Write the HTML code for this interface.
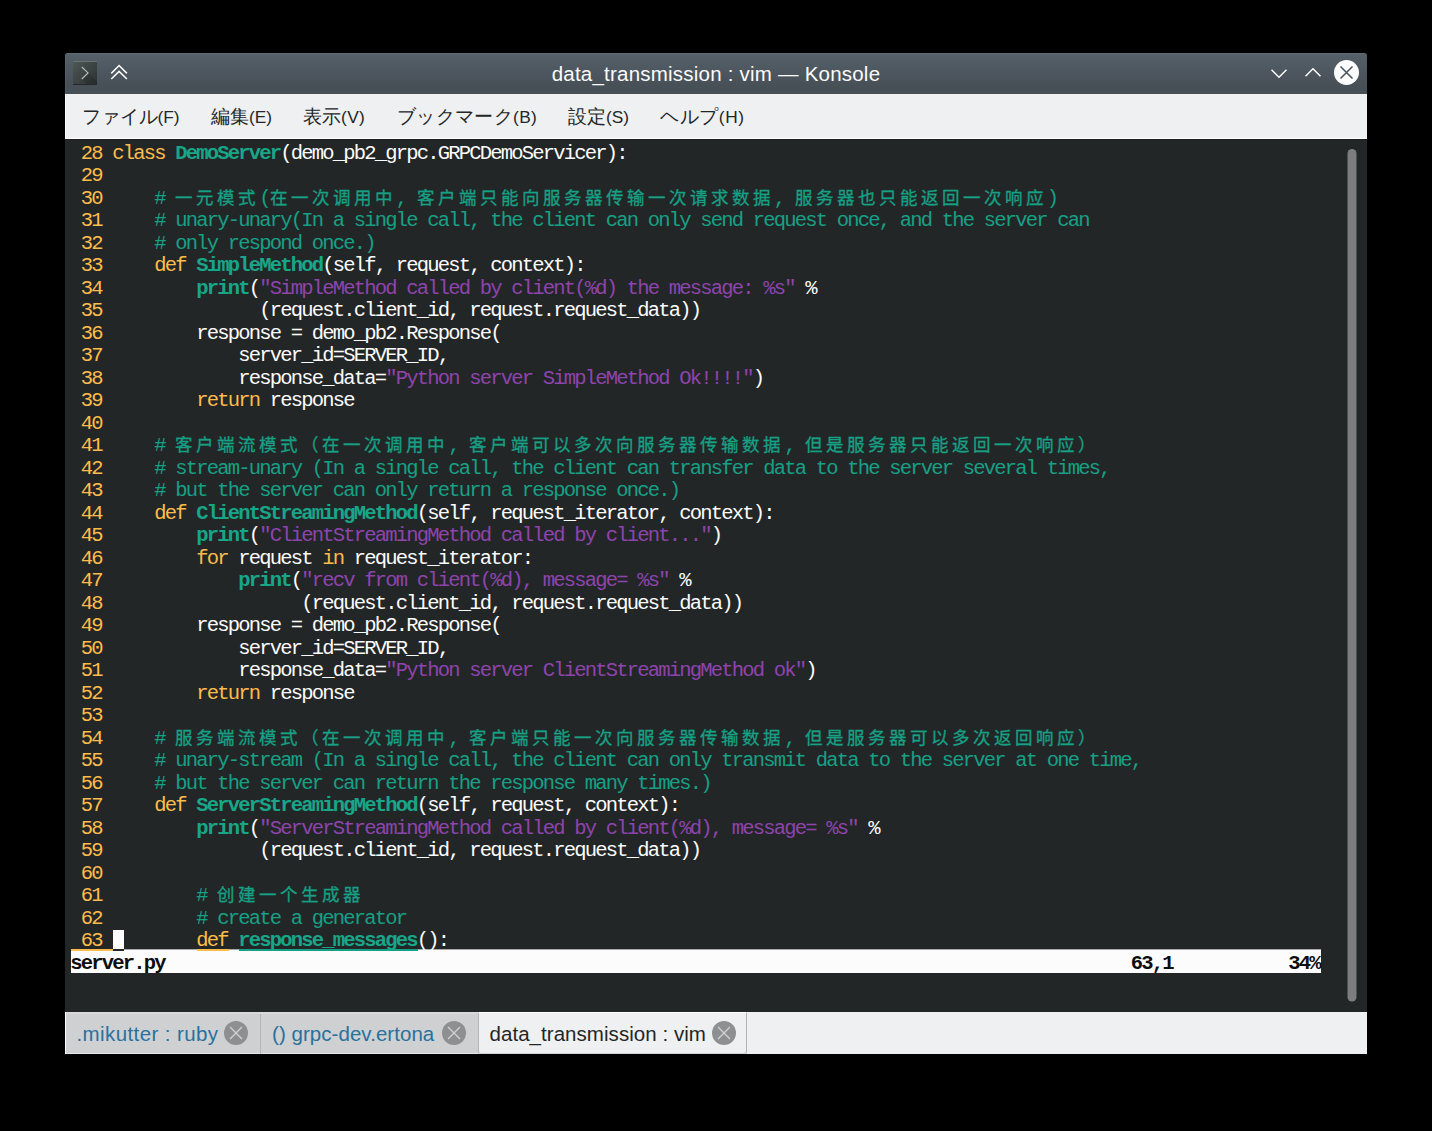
<!DOCTYPE html>
<html lang="ja">
<head>
<meta charset="utf-8">
<title>data_transmission : vim — Konsole</title>
<style>
html,body{margin:0;padding:0;background:#000;}
body{width:1432px;height:1131px;overflow:hidden;position:relative;font-family:"Liberation Sans",sans-serif;}
#win{position:absolute;left:65px;top:53px;width:1302px;height:1001px;overflow:hidden;border-radius:3px 3px 0 0;background:#232627;}
#tb{position:absolute;left:0;top:0;width:1302px;height:41px;background:linear-gradient(#566069 0%,#475057 80%,#475057 100%);box-shadow:inset 0 1px 0 rgba(255,255,255,.07),inset 1px 0 0 rgba(255,255,255,.05);}
#title{position:absolute;left:0;top:-0.5px;width:1302px;height:41px;line-height:41px;text-align:center;color:#fcfcfc;font-size:20.5px;letter-spacing:0.22px;white-space:pre;}
#mb{position:absolute;left:0;top:41px;width:1302px;height:45px;background:#eff0f1;box-shadow:inset 1px 0 0 #fff,inset 0 -1px 0 #fff;}
#mb b{font-weight:normal;font-size:17.3px;}
#mb span{position:absolute;top:0;height:45px;line-height:45px;font-size:19px;color:#232627;white-space:pre;}
#term{position:absolute;left:0;top:86px;width:1302px;height:873px;background:#232627;box-shadow:inset 0 1px 0 #1b1e1f;}
.r{position:absolute;left:5.25px;height:22.5px;line-height:22.5px;white-space:pre;color:#fcfcfc;font-family:"Liberation Mono",monospace;font-size:20.5px;letter-spacing:-1.802px;}
.n,.k{color:#fdbc4b;}
.f{color:#18a689;font-weight:bold;}
.c{color:#16a085;}
.s{color:#8e44ad;}
.z{letter-spacing:0;font-size:17.5px;font-weight:500;position:relative;top:-0.5px;-webkit-text-stroke:0.3px currentColor;}
.z i{display:inline-block;width:21px;text-align:left;font-style:normal;}
#tabs{position:absolute;left:0;top:959px;width:1302px;height:42px;background:#eff0f1;}

#sbar{position:absolute;left:6px;top:898px;width:1250px;height:22px;background:#fcfcfc;}
.r.st{color:#0c0e0f;font-weight:bold;}
#cur{position:absolute;left:48px;top:877px;width:11px;height:19px;background:#fcfcfc;}
.u{position:absolute;top:896px;height:2px;}
#thumb{position:absolute;left:1281px;top:95px;}
#tabs .in{position:absolute;left:0;top:0;width:414px;height:42px;background:#cfd0d1;box-shadow:inset 1px 0 0 #fff,inset 0 -1px 0 #e6e7e8,inset 0 2px 0 #d8d9da;}
#tabs .sep{position:absolute;left:195px;top:2px;width:1px;height:40px;background:#b4b6b7;}
#tabs .act{position:absolute;left:413px;top:0;width:267px;height:40px;background:#eff0f1;border:1px solid #b2b4b5;border-top:1px solid #fff;border-bottom-color:#d2d3d4;border-radius:0 0 3px 3px;box-sizing:content-box;}
#tabs .lb{position:absolute;top:1px;height:42px;line-height:42px;font-size:20.5px;white-space:pre;color:#29709e;}
#tabs .cb{position:absolute;top:9px;width:24px;height:24px;}
.ic{position:absolute;}
.r u{display:inline-block;text-decoration:none;}
.w1{width:10.5px}.w2{width:21.0px}.w3{width:31.5px}.w4{width:42.0px}.w5{width:52.5px}.w6{width:63.0px}.w7{width:73.5px}.w8{width:84.0px}
</style>
</head>
<body>
<div id="win">
  <div id="tb"></div>
  <div id="title">data_transmission : vim — Konsole</div>
  
  <svg class="ic" style="left:8px;top:8px" width="24" height="24" viewBox="0 0 24 24"><defs><linearGradient id="kg" x1="0" y1="0" x2="1" y2="1"><stop offset="0" stop-color="#4d5855"/><stop offset="1" stop-color="#2c3032"/></linearGradient></defs><rect width="24" height="24" fill="url(#kg)"/><path d="M15.3 11.9L24 20.6V24H14.8L8.8 18Z" fill="#000" fill-opacity="0.13"/><rect width="24" height="1" fill="#6b7171"/><rect y="23" width="24" height="1" fill="#26292b"/><path d="M8.8 6L15.1 11.95L8.8 18" stroke="#bcc0c1" stroke-width="1.05" fill="none"/></svg>
  <svg class="ic" style="left:45px;top:11px" width="18" height="16" viewBox="0 0 18 16"><path d="M1.3 9.4L9.1 1.5L16.9 9.4M1.3 15L9.1 7.4L16.9 15" stroke="#fcfcfc" stroke-width="1.5" fill="none"/></svg>
  <svg class="ic" style="left:1205px;top:15px" width="18" height="11" viewBox="0 0 18 11"><path d="M1.5 1.8L9 9.3L16.5 1.8" stroke="#fcfcfc" stroke-width="1.5" fill="none"/></svg>
  <svg class="ic" style="left:1239px;top:14px" width="18" height="11" viewBox="0 0 18 11"><path d="M1.5 9.3L9 1.8L16.5 9.3" stroke="#fcfcfc" stroke-width="1.5" fill="none"/></svg>
  <svg class="ic" style="left:1269px;top:7px" width="25" height="25" viewBox="0 0 25 25"><circle cx="12.5" cy="12.5" r="12.5" fill="#fcfcfc"/><path d="M6.5 6.5L18.5 18.5M18.5 6.5L6.5 18.5" stroke="#475057" stroke-width="1.5" fill="none"/></svg>
  <div id="mb" lang="ja"><span style="left:16.5px">ファイル<b>(F)</b></span><span style="left:146px">編集<b>(E)</b></span><span style="left:237.5px;letter-spacing:0.3px">表示<b>(V)</b></span><span style="left:332px;letter-spacing:0.35px">ブックマーク<b>(B)</b></span><span style="left:503px">設定<b>(S)</b></span><span style="left:595px;letter-spacing:0.6px">ヘルプ<b>(H)</b></span></div>
  <div id="term"></div>

  <svg id="thumb" width="12" height="856" viewBox="0 0 12 856"><rect x="1.5" y="1" width="9" height="852.5" rx="4.5" fill="#7b7d7e"/></svg>
  <div id="sbar"></div>
  <div id="cur"></div>
  <div class="u" style="left:6px;width:42px;background:#fdbc4b"></div>
  <div class="u" style="left:48px;width:11px;background:#232627"></div>
  <div class="u" style="left:59px;width:73px;background:linear-gradient(#a8aaab 50%,#fcfcfc 50%)"></div>
  <div class="u" style="left:132px;width:32px;background:#fdbc4b"></div>
  <div class="u" style="left:164px;width:10px;background:linear-gradient(#a8aaab 50%,#fcfcfc 50%)"></div>
  <div class="u" style="left:174px;width:179px;background:#16a085"></div>
  <div class="u" style="left:353px;width:903px;background:linear-gradient(#a8aaab 50%,#fcfcfc 50%)"></div>
<div class="r" style="top:90.0px"><span class="n"><u class="w4"> 28 </u></span><span class="k"><u class="w5">class</u></span><u class="w1"> </u><span class="f"><u class="w8">DemoServ</u><u class="w2">er</u></span><u class="w8">(demo_pb</u><u class="w8">2_grpc.G</u><u class="w8">RPCDemoS</u><u class="w8">ervicer)</u><u class="w1">:</u></div>
<div class="r" style="top:112.0px"><span class="n"><u class="w4"> 29 </u></span></div>
<div class="r" style="top:135.0px"><span class="n"><u class="w4"> 30 </u></span><u class="w4">    </u><span class="c"><u class="w2"># </u><span class="z" lang="zh-CN"><i>一</i><i>元</i><i>模</i><i>式</i></span><u class="w1">(</u><span class="z" lang="zh-CN"><i>在</i><i>一</i><i>次</i><i>调</i><i>用</i><i>中</i></span><u class="w2">, </u><span class="z" lang="zh-CN"><i>客</i><i>户</i><i>端</i><i>只</i><i>能</i><i>向</i><i>服</i><i>务</i><i>器</i><i>传</i><i>输</i><i>一</i><i>次</i><i>请</i><i>求</i><i>数</i><i>据</i></span><u class="w2">, </u><span class="z" lang="zh-CN"><i>服</i><i>务</i><i>器</i><i>也</i><i>只</i><i>能</i><i>返</i><i>回</i><i>一</i><i>次</i><i>响</i><i>应</i></span><u class="w1">)</u></span></div>
<div class="r" style="top:157.0px"><span class="n"><u class="w4"> 31 </u></span><u class="w4">    </u><span class="c"><u class="w8"># unary-</u><u class="w8">unary(In</u><u class="w8"> a singl</u><u class="w8">e call, </u><u class="w8">the clie</u><u class="w8">nt can o</u><u class="w8">nly send</u><u class="w8"> request</u><u class="w8"> once, a</u><u class="w8">nd the s</u><u class="w8">erver ca</u><u class="w1">n</u></span></div>
<div class="r" style="top:180.0px"><span class="n"><u class="w4"> 32 </u></span><u class="w4">    </u><span class="c"><u class="w8"># only r</u><u class="w8">espond o</u><u class="w5">nce.)</u></span></div>
<div class="r" style="top:202.0px"><span class="n"><u class="w4"> 33 </u></span><u class="w4">    </u><span class="k"><u class="w3">def</u></span><u class="w1"> </u><span class="f"><u class="w8">SimpleMe</u><u class="w4">thod</u></span><u class="w8">(self, r</u><u class="w8">equest, </u><u class="w8">context)</u><u class="w1">:</u></div>
<div class="r" style="top:225.0px"><span class="n"><u class="w4"> 34 </u></span><u class="w8">        </u><span class="f"><u class="w5">print</u></span><u class="w1">(</u><span class="s"><u class="w8">"SimpleM</u><u class="w8">ethod ca</u><u class="w8">lled by </u><u class="w8">client(%</u><u class="w8">d) the m</u><u class="w8">essage: </u><u class="w3">%s"</u></span><u class="w2"> %</u></div>
<div class="r" style="top:247.0px"><span class="n"><u class="w4"> 35 </u></span><u class="w8">        </u><u class="w8">      (r</u><u class="w8">equest.c</u><u class="w8">lient_id</u><u class="w8">, reques</u><u class="w8">t.reques</u><u class="w8">t_data))</u></div>
<div class="r" style="top:270.0px"><span class="n"><u class="w4"> 36 </u></span><u class="w8">        </u><u class="w8">response</u><u class="w8"> = demo_</u><u class="w8">pb2.Resp</u><u class="w5">onse(</u></div>
<div class="r" style="top:292.0px"><span class="n"><u class="w4"> 37 </u></span><u class="w8">        </u><u class="w8">    serv</u><u class="w8">er_id=SE</u><u class="w8">RVER_ID,</u></div>
<div class="r" style="top:315.0px"><span class="n"><u class="w4"> 38 </u></span><u class="w8">        </u><u class="w8">    resp</u><u class="w8">onse_dat</u><u class="w2">a=</u><span class="s"><u class="w8">"Python </u><u class="w8">server S</u><u class="w8">impleMet</u><u class="w8">hod Ok!!</u><u class="w3">!!"</u></span><u class="w1">)</u></div>
<div class="r" style="top:337.0px"><span class="n"><u class="w4"> 39 </u></span><u class="w8">        </u><span class="k"><u class="w6">return</u></span><u class="w8"> respons</u><u class="w1">e</u></div>
<div class="r" style="top:360.0px"><span class="n"><u class="w4"> 40 </u></span></div>
<div class="r" style="top:382.0px"><span class="n"><u class="w4"> 41 </u></span><u class="w4">    </u><span class="c"><u class="w2"># </u><span class="z" lang="zh-CN"><i>客</i><i>户</i><i>端</i><i>流</i><i>模</i><i>式</i><i>（</i><i>在</i><i>一</i><i>次</i><i>调</i><i>用</i><i>中</i></span><u class="w2">, </u><span class="z" lang="zh-CN"><i>客</i><i>户</i><i>端</i><i>可</i><i>以</i><i>多</i><i>次</i><i>向</i><i>服</i><i>务</i><i>器</i><i>传</i><i>输</i><i>数</i><i>据</i></span><u class="w2">, </u><span class="z" lang="zh-CN"><i>但</i><i>是</i><i>服</i><i>务</i><i>器</i><i>只</i><i>能</i><i>返</i><i>回</i><i>一</i><i>次</i><i>响</i><i>应</i><i>）</i></span></span></div>
<div class="r" style="top:405.0px"><span class="n"><u class="w4"> 42 </u></span><u class="w4">    </u><span class="c"><u class="w8"># stream</u><u class="w8">-unary (</u><u class="w8">In a sin</u><u class="w8">gle call</u><u class="w8">, the cl</u><u class="w8">ient can</u><u class="w8"> transfe</u><u class="w8">r data t</u><u class="w8">o the se</u><u class="w8">rver sev</u><u class="w8">eral tim</u><u class="w3">es,</u></span></div>
<div class="r" style="top:427.0px"><span class="n"><u class="w4"> 43 </u></span><u class="w4">    </u><span class="c"><u class="w8"># but th</u><u class="w8">e server</u><u class="w8"> can onl</u><u class="w8">y return</u><u class="w8"> a respo</u><u class="w8">nse once</u><u class="w2">.)</u></span></div>
<div class="r" style="top:450.0px"><span class="n"><u class="w4"> 44 </u></span><u class="w4">    </u><span class="k"><u class="w3">def</u></span><u class="w1"> </u><span class="f"><u class="w8">ClientSt</u><u class="w8">reamingM</u><u class="w5">ethod</u></span><u class="w8">(self, r</u><u class="w8">equest_i</u><u class="w8">terator,</u><u class="w8"> context</u><u class="w2">):</u></div>
<div class="r" style="top:472.0px"><span class="n"><u class="w4"> 45 </u></span><u class="w8">        </u><span class="f"><u class="w5">print</u></span><u class="w1">(</u><span class="s"><u class="w8">"ClientS</u><u class="w8">treaming</u><u class="w8">Method c</u><u class="w8">alled by</u><u class="w8"> client.</u><u class="w3">.."</u></span><u class="w1">)</u></div>
<div class="r" style="top:495.0px"><span class="n"><u class="w4"> 46 </u></span><u class="w8">        </u><span class="k"><u class="w3">for</u></span><u class="w8"> request</u><u class="w1"> </u><span class="k"><u class="w2">in</u></span><u class="w8"> request</u><u class="w8">_iterato</u><u class="w2">r:</u></div>
<div class="r" style="top:517.0px"><span class="n"><u class="w4"> 47 </u></span><u class="w8">        </u><u class="w4">    </u><span class="f"><u class="w5">print</u></span><u class="w1">(</u><span class="s"><u class="w8">"recv fr</u><u class="w8">om clien</u><u class="w8">t(%d), m</u><u class="w8">essage= </u><u class="w3">%s"</u></span><u class="w2"> %</u></div>
<div class="r" style="top:540.0px"><span class="n"><u class="w4"> 48 </u></span><u class="w8">        </u><u class="w8">        </u><u class="w8">  (reque</u><u class="w8">st.clien</u><u class="w8">t_id, re</u><u class="w8">quest.re</u><u class="w8">quest_da</u><u class="w4">ta))</u></div>
<div class="r" style="top:562.0px"><span class="n"><u class="w4"> 49 </u></span><u class="w8">        </u><u class="w8">response</u><u class="w8"> = demo_</u><u class="w8">pb2.Resp</u><u class="w5">onse(</u></div>
<div class="r" style="top:585.0px"><span class="n"><u class="w4"> 50 </u></span><u class="w8">        </u><u class="w8">    serv</u><u class="w8">er_id=SE</u><u class="w8">RVER_ID,</u></div>
<div class="r" style="top:607.0px"><span class="n"><u class="w4"> 51 </u></span><u class="w8">        </u><u class="w8">    resp</u><u class="w8">onse_dat</u><u class="w2">a=</u><span class="s"><u class="w8">"Python </u><u class="w8">server C</u><u class="w8">lientStr</u><u class="w8">eamingMe</u><u class="w8">thod ok"</u></span><u class="w1">)</u></div>
<div class="r" style="top:630.0px"><span class="n"><u class="w4"> 52 </u></span><u class="w8">        </u><span class="k"><u class="w6">return</u></span><u class="w8"> respons</u><u class="w1">e</u></div>
<div class="r" style="top:652.0px"><span class="n"><u class="w4"> 53 </u></span></div>
<div class="r" style="top:675.0px"><span class="n"><u class="w4"> 54 </u></span><u class="w4">    </u><span class="c"><u class="w2"># </u><span class="z" lang="zh-CN"><i>服</i><i>务</i><i>端</i><i>流</i><i>模</i><i>式</i><i>（</i><i>在</i><i>一</i><i>次</i><i>调</i><i>用</i><i>中</i></span><u class="w2">, </u><span class="z" lang="zh-CN"><i>客</i><i>户</i><i>端</i><i>只</i><i>能</i><i>一</i><i>次</i><i>向</i><i>服</i><i>务</i><i>器</i><i>传</i><i>输</i><i>数</i><i>据</i></span><u class="w2">, </u><span class="z" lang="zh-CN"><i>但</i><i>是</i><i>服</i><i>务</i><i>器</i><i>可</i><i>以</i><i>多</i><i>次</i><i>返</i><i>回</i><i>响</i><i>应</i><i>）</i></span></span></div>
<div class="r" style="top:697.0px"><span class="n"><u class="w4"> 55 </u></span><u class="w4">    </u><span class="c"><u class="w8"># unary-</u><u class="w8">stream (</u><u class="w8">In a sin</u><u class="w8">gle call</u><u class="w8">, the cl</u><u class="w8">ient can</u><u class="w8"> only tr</u><u class="w8">ansmit d</u><u class="w8">ata to t</u><u class="w8">he serve</u><u class="w8">r at one</u><u class="w6"> time,</u></span></div>
<div class="r" style="top:720.0px"><span class="n"><u class="w4"> 56 </u></span><u class="w4">    </u><span class="c"><u class="w8"># but th</u><u class="w8">e server</u><u class="w8"> can ret</u><u class="w8">urn the </u><u class="w8">response</u><u class="w8"> many ti</u><u class="w5">mes.)</u></span></div>
<div class="r" style="top:742.0px"><span class="n"><u class="w4"> 57 </u></span><u class="w4">    </u><span class="k"><u class="w3">def</u></span><u class="w1"> </u><span class="f"><u class="w8">ServerSt</u><u class="w8">reamingM</u><u class="w5">ethod</u></span><u class="w8">(self, r</u><u class="w8">equest, </u><u class="w8">context)</u><u class="w1">:</u></div>
<div class="r" style="top:765.0px"><span class="n"><u class="w4"> 58 </u></span><u class="w8">        </u><span class="f"><u class="w5">print</u></span><u class="w1">(</u><span class="s"><u class="w8">"ServerS</u><u class="w8">treaming</u><u class="w8">Method c</u><u class="w8">alled by</u><u class="w8"> client(</u><u class="w8">%d), mes</u><u class="w8">sage= %s</u><u class="w1">"</u></span><u class="w2"> %</u></div>
<div class="r" style="top:787.0px"><span class="n"><u class="w4"> 59 </u></span><u class="w8">        </u><u class="w8">      (r</u><u class="w8">equest.c</u><u class="w8">lient_id</u><u class="w8">, reques</u><u class="w8">t.reques</u><u class="w8">t_data))</u></div>
<div class="r" style="top:810.0px"><span class="n"><u class="w4"> 60 </u></span></div>
<div class="r" style="top:832.0px"><span class="n"><u class="w4"> 61 </u></span><u class="w8">        </u><span class="c"><u class="w2"># </u><span class="z" lang="zh-CN"><i>创</i><i>建</i><i>一</i><i>个</i><i>生</i><i>成</i><i>器</i></span></span></div>
<div class="r" style="top:855.0px"><span class="n"><u class="w4"> 62 </u></span><u class="w8">        </u><span class="c"><u class="w8"># create</u><u class="w8"> a gener</u><u class="w4">ator</u></span></div>
<div class="r" style="top:877.0px"><span class="n"><u class="w4"> 63 </u></span><u class="w8">        </u><span class="k"><u class="w3">def</u></span><u class="w1"> </u><span class="f"><u class="w8">response</u><u class="w8">_message</u><u class="w1">s</u></span><u class="w3">():</u></div>
<div class="r st" style="top:900.0px"><u class="w8">server.p</u><u class="w1">y</u><u class="wg" style="width:966.0px"></u><u class="w4">63,1</u><u class="wg" style="width:115.5px"></u><u class="w3">34%</u></div>
  <div id="tabs"><div class="in"></div><div class="sep"></div><div class="act"></div><div style="position:absolute;left:413px;top:41px;width:269px;height:1px;background:#d0d1d2"></div>
<span class="lb" id="t1" style="left:11.5px;letter-spacing:0.4px">.mikutter : ruby</span><svg class="cb" style="left:159px" viewBox="0 0 24 24"><circle cx="12" cy="12" r="12" fill="#8e8f90"/><path d="M6 6L18 18M18 6L6 18" stroke="#d0d1d2" stroke-width="1.4" fill="none"/></svg>
<span class="lb" id="t2" style="left:207px;letter-spacing:0.05px">() grpc-dev.ertona</span><svg class="cb" style="left:377px" viewBox="0 0 24 24"><circle cx="12" cy="12" r="12" fill="#8e8f90"/><path d="M6 6L18 18M18 6L6 18" stroke="#d0d1d2" stroke-width="1.4" fill="none"/></svg>
<span class="lb" id="t3" style="left:424.5px;color:#232627;letter-spacing:0.05px">data_transmission : vim</span><svg class="cb" style="left:647px" viewBox="0 0 24 24"><circle cx="12" cy="12" r="12" fill="#8e8f90"/><path d="M6 6L18 18M18 6L6 18" stroke="#d0d1d2" stroke-width="1.4" fill="none"/></svg>
</div>
</div>
</body>
</html>
